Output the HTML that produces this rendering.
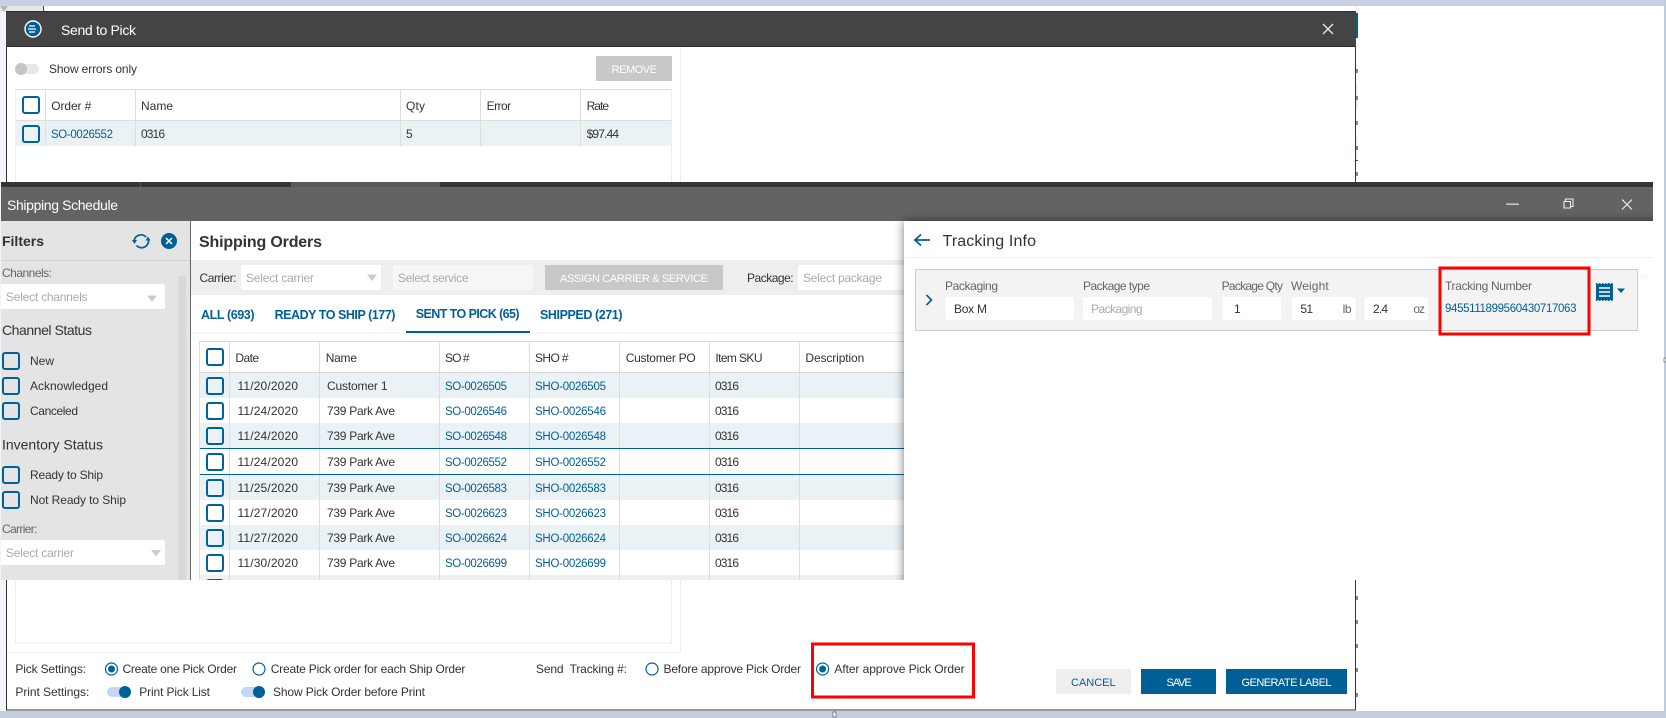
<!DOCTYPE html>
<html lang="en"><head><meta charset="utf-8"><title>Send to Pick</title>
<style>
html,body{margin:0;padding:0;background:#fff;width:1666px;height:718px;overflow:hidden}
svg{display:block}
text{font-family:"Liberation Sans",sans-serif;font-size:12px;fill:#333}
.l{fill:#005f96}.m{font-size:11.5px}
.g{fill:#666}.p{fill:#aaa}.h{font-size:14px}
.b{font-weight:700}.t{font-weight:700;fill:#005f96;font-size:12.5px}
.w{fill:#fff}.u{font-size:11px}
</style></head><body>
<svg xmlns="http://www.w3.org/2000/svg" width="1666" height="718" viewBox="0 0 1666 718">
<defs>
<rect id="cb" width="16" height="16" rx="2" fill="none" stroke="#00619b" stroke-width="2"/>
<clipPath id="win"><rect x="0" y="182" width="1653" height="398"/></clipPath>
<filter id="sh" x="-5%" y="-10%" width="110%" height="120%"><feDropShadow dx="0" dy="0" stdDeviation="5" flood-color="#000" flood-opacity=".55"/></filter>
</defs>
<rect width="1666" height="718" fill="#fff"/>
<rect width="1666" height="6" fill="#c8d0e2"/>
<rect x="1664" width="2" height="718" fill="#c0cbdd"/>
<rect y="711" width="1666" height="7" fill="#c3cddb"/>
<rect y="6" width="6" height="705" fill="#f2f5fa"/>
<rect x="0" y="6" width="43" height="5" fill="#e6e6e6"/>
<path d="M0 6h8l-4 6z" fill="#b8b8b8"/>
<rect x="43" y="6" width="1" height="5" fill="#444"/>
<rect x="1356" y="6" width="2" height="7" fill="#eef1f7"/>
<rect x="1356" y="13" width="2" height="25" fill="#005f96"/>
<rect x="1356" y="84" width="2" height="26" fill="#eef3f6"/>
<rect x="1356" y="135" width="2" height="25" fill="#eef3f6"/>
<rect x="1356" y="160" width="2" height="1" fill="#005f96"/>
<path d="M1356 71h2M1356 98h2M1356 123h2M1356 148h2M1356 174h2M1356 598h2M1356 622h2M1356 646h2M1356 670h2M1356 695h2" stroke="#555" stroke-width="4" stroke-dasharray="none" opacity=".7"/>
<rect x="833" y="712" width="3" height="5" fill="#fff" stroke="#555" stroke-width=".7"/>
<rect x="1664" y="358" width="2" height="4" fill="#fff" stroke="#555" stroke-width=".6"/>

<!-- Send to Pick window -->
<rect x="6.5" y="11.5" width="1349" height="698.5" fill="#fff" stroke="#333"/>
<rect x="6" y="11" width="1350" height="36" fill="#444"/>
<rect x="6" y="11" width="1350" height="1" fill="#2f2f2f"/><rect x="6" y="46" width="1350" height="1" fill="#2f2f2f"/>
<circle cx="33" cy="29" r="8" fill="#005f96" stroke="#fff" stroke-width="1.4"/>
<path d="M29 26h6M28 29h8M29 32h6" stroke="#fff" stroke-width="1.2" fill="none"/>
<text class="w h" x="61" y="35" textLength="75">Send to Pick</text>
<path d="M1323 24l10 10M1333 24l-10 10" stroke="#e8e8e8" stroke-width="1.3"/>
<rect x="680" y="47" width="1" height="605" fill="#eee"/>
<rect x="15" y="64" width="24" height="10" rx="5" fill="#e8e8e8"/><circle cx="21" cy="69" r="6" fill="#c4c4c4"/>
<text x="49" y="73" textLength="88">Show errors only</text>
<rect x="596" y="56" width="76" height="25" fill="#c8c8c8"/>
<text class="w u" x="611.6" y="73" textLength="45.4">REMOVE</text>
<rect x="15.5" y="89.5" width="656" height="553.5" fill="#fff" stroke="#eee"/>
<rect x="16" y="121" width="655" height="25" fill="#eaf2f6"/>
<path d="M16 89.5h655M16 120.500h655" stroke="#ddd"/>
<path d="M45.500 90V146M135.500 90V146M400.500 90V146M480.500 90V146M580.500 90V146" stroke="#ddd"/>
<use href="#cb" x="23" y="97"/><use href="#cb" x="23" y="126"/>
<text x="51.300" y="110" textLength="40">Order #</text><text x="141" y="110" textLength="32">Name</text><text x="406" y="110" textLength="19">Qty</text><text x="486.600" y="110" textLength="24.500">Error</text><text x="586.600" y="110" textLength="22.500">Rate</text>
<text class="l m" x="51" y="138" textLength="62">SO-0026552</text><text x="141" y="138" textLength="24">0316</text><text x="406" y="138">5</text><text x="586.600" y="138" textLength="32.500">$97.44</text>
<rect x="7" y="652" width="673" height="1" fill="#eee"/>

<text x="15.400" y="673" textLength="70.600">Pick Settings:</text>
<circle cx="111.500" cy="669" r="6" fill="#fff" stroke="#00619b" stroke-width="1.200"/><circle cx="111.500" cy="669" r="3.500" fill="#00619b"/>
<text x="122.500" y="673" textLength="114.500">Create one Pick Order</text>
<circle cx="259" cy="669" r="6" fill="#fff" stroke="#00619b" stroke-width="1.200"/>
<text x="270.700" y="673" textLength="194.700">Create Pick order for each Ship Order</text>
<text x="15.400" y="696" textLength="73.900">Print Settings:</text>
<rect x="107" y="687" width="22" height="10" rx="5" fill="#c3d6f7"/><circle cx="125" cy="692" r="6" fill="#005f96"/>
<text x="139.300" y="696" textLength="70.700">Print Pick List</text>
<rect x="241" y="687" width="22" height="10" rx="5" fill="#c3d6f7"/><circle cx="259" cy="692" r="6" fill="#005f96"/>
<text x="273" y="696" textLength="152">Show Pick Order before Print</text>
<text x="536" y="673" textLength="91" xml:space="preserve">Send  Tracking #:</text>
<circle cx="652" cy="669" r="6" fill="#fff" stroke="#00619b" stroke-width="1.200"/>
<text x="663.500" y="673" textLength="137.500">Before approve Pick Order</text>
<circle cx="822.600" cy="669" r="6" fill="#fff" stroke="#00619b" stroke-width="1.200"/><circle cx="822.600" cy="669" r="3.500" fill="#00619b"/>
<text x="834.400" y="673" textLength="130.200">After approve Pick Order</text>
<rect x="812.500" y="644" width="161" height="53" fill="none" stroke="#f00" stroke-width="3"/>
<rect x="1056" y="669" width="75" height="25" fill="#eee"/><text class="l u" x="1071" y="686" textLength="44.600">CANCEL</text>
<rect x="1141" y="669" width="75" height="25" fill="#005f96"/><text class="w u" x="1166.500" y="686" textLength="25.200">SAVE</text>
<rect x="1226" y="669" width="121" height="25" fill="#005f96"/><text class="w u" x="1241.500" y="686" textLength="90">GENERATE LABEL</text>

<!-- Shipping Schedule window -->
<g clip-path="url(#win)">
<rect x="1" y="182" width="1652" height="5" fill="#353535"/>
<rect x="140" y="182" width="1" height="5" fill="#555"/><rect x="291" y="182" width="149" height="5" fill="#5a5a5a"/>
<rect x="1" y="187" width="1652" height="34" fill="#636363"/>
<text class="w h" x="7" y="210" textLength="111">Shipping Schedule</text>
<rect x="1506" y="203.500" width="13" height="1.300" fill="#ddd"/>
<path d="M1565.500 201.500v-2.500h7.500v7.500h-2.500M1565.500 201.500h5v6.500h-6.500v-6.500z" fill="none" stroke="#eee" stroke-width="1.100"/>
<path d="M1622 199.500l10 10M1632 199.500l-10 10" stroke="#eee" stroke-width="1.200"/>

<!-- Sidebar -->
<rect x="1" y="221" width="189" height="359" fill="#e4e4e4"/>
<rect x="190" y="221" width="1" height="359" fill="#666"/>
<rect x="1" y="260" width="189" height="1" fill="#d2d2d2"/>
<rect x="178.600" y="276" width="7.400" height="304" fill="#d8d8d8"/>
<path d="M179 270l3.500-3 3.500 3" fill="none" stroke="#ececec"/>
<text class="b h" x="2" y="246" textLength="42">Filters</text>
<path d="M134 241.500a7 7 0 0 1 12-4.500M148.500 239.500a7 7 0 0 1-12 6" fill="none" stroke="#005f96" stroke-width="1.700"/>
<path d="M132 240h5l-2.500 4zM145.500 240.500h5l-2.500-4z" fill="#005f96"/>
<circle cx="169" cy="241" r="8" fill="#005f96"/>
<path d="M166 238l6 6M172 238l-6 6" stroke="#fff" stroke-width="1.500"/>
<text class="g" x="2" y="277" textLength="50">Channels:</text>
<rect x="1" y="284" width="164" height="25" rx="2" fill="#fff"/>
<text class="p" x="6" y="301" textLength="81.500">Select channels</text>
<path d="M147 295.500h10l-5 6.500z" fill="#ccc"/>
<text class="h" x="2" y="335" textLength="90">Channel Status</text>
<use href="#cb" x="3" y="353"/><text x="30" y="365" textLength="24">New</text>
<use href="#cb" x="3" y="378"/><text x="30" y="390" textLength="78">Acknowledged</text>
<use href="#cb" x="3" y="403"/><text x="30" y="415" textLength="48">Canceled</text>
<text class="h" x="2" y="449.500" textLength="101">Inventory Status</text>
<use href="#cb" x="3" y="467"/><text x="30" y="479" textLength="73">Ready to Ship</text>
<use href="#cb" x="3" y="492"/><text x="30" y="504" textLength="96">Not Ready to Ship</text>
<text class="g" x="2" y="533" textLength="35.500">Carrier:</text>
<rect x="1" y="540" width="164" height="25" rx="2" fill="#fff"/>
<text class="p" x="6" y="557" textLength="68">Select carrier</text>
<path d="M151 550h10l-5 6.500z" fill="#ccc"/>
<text class="g" x="2" y="589" textLength="40">Weight:</text>

<!-- Main -->
<rect x="191" y="221" width="713" height="359" fill="#fff"/>
<text class="b" style="font-size:16px" x="199" y="247" textLength="123">Shipping Orders</text>
<rect x="191" y="260" width="713" height="35" fill="#eee"/>
<text x="199.500" y="282" textLength="37">Carrier:</text>
<rect x="241" y="265" width="140" height="25" rx="2" fill="#fff"/>
<text class="p" x="246" y="282" textLength="68">Select carrier</text>
<path d="M367 274.500h10l-5 6.500z" fill="#ccc"/>
<rect x="393" y="265" width="140" height="25" rx="2" fill="#f6f6f6"/>
<text class="p" x="398" y="282" textLength="70.500">Select service</text>
<rect x="545" y="265" width="178" height="25" rx="1" fill="#c8c8c8"/>
<text class="w u" x="560" y="282" textLength="148">ASSIGN CARRIER &amp; SERVICE</text>
<text x="747" y="282" textLength="46.600">Package:</text>
<rect x="798" y="265" width="110" height="25" rx="2" fill="#fff"/>
<text class="p" x="803" y="282" textLength="79">Select package</text>
<text class="t" x="201" y="319" textLength="53.500">ALL (693)</text>
<text class="t" x="274.600" y="319" textLength="120.800">READY TO SHIP (177)</text>
<text class="t" x="415.700" y="318" textLength="103.900">SENT TO PICK (65)</text>
<text class="t" x="540" y="319" textLength="82.500">SHIPPED (271)</text>
<rect x="191" y="332.500" width="713" height="1" fill="#eee"/>
<rect x="406" y="331" width="124" height="2" fill="#005f96"/>

<rect x="200" y="372" width="704" height="26" fill="#eaf2f6"/>
<rect x="200" y="423" width="704" height="25" fill="#eaf2f6"/>
<rect x="200" y="474" width="704" height="26" fill="#eaf2f6"/>
<rect x="200" y="525" width="704" height="25" fill="#eaf2f6"/>
<rect x="200" y="575" width="704" height="5" fill="#eaf2f6"/>
<path d="M200 341.500h704M200 372.500h704" stroke="#d8d8d8"/>
<path d="M199.500 341V580M229.500 341V580M319.500 341V580M439.500 341V580M529.500 341V580M619.500 341V580M709.500 341V580M799.500 341V580" stroke="#ddd"/>
<path d="M200 448.500h704M200 474.500h704" stroke="#005f96"/>
<use href="#cb" x="207" y="349"/>
<text x="235.400" y="362" textLength="23.600">Date</text><text x="325.700" y="362" textLength="31.300">Name</text><text x="445" y="362" textLength="24.600">SO #</text><text x="535" y="362" textLength="33.600">SHO #</text><text x="625.700" y="362" textLength="70">Customer PO</text><text x="715.400" y="362" textLength="47.100">Item SKU</text><text x="805.400" y="362" textLength="58.900">Description</text>

<use href="#cb" x="207" y="378"/><text x="237.500" y="390" textLength="60.500">11/20/2020</text><text x="327" y="390" textLength="60.500">Customer 1</text><text class="l m" x="445" y="390" textLength="62">SO-0026505</text><text class="l m" x="535" y="390" textLength="71">SHO-0026505</text><text x="715" y="390" textLength="24">0316</text>
<use href="#cb" x="207" y="403"/><text x="237.500" y="415" textLength="60.500">11/24/2020</text><text x="327" y="415" textLength="68">739 Park Ave</text><text class="l m" x="445" y="415" textLength="62">SO-0026546</text><text class="l m" x="535" y="415" textLength="71">SHO-0026546</text><text x="715" y="415" textLength="24">0316</text>
<use href="#cb" x="207" y="428"/><text x="237.500" y="440" textLength="60.500">11/24/2020</text><text x="327" y="440" textLength="68">739 Park Ave</text><text class="l m" x="445" y="440" textLength="62">SO-0026548</text><text class="l m" x="535" y="440" textLength="71">SHO-0026548</text><text x="715" y="440" textLength="24">0316</text>
<use href="#cb" x="207" y="454"/><text x="237.500" y="466" textLength="60.500">11/24/2020</text><text x="327" y="466" textLength="68">739 Park Ave</text><text class="l m" x="445" y="466" textLength="62">SO-0026552</text><text class="l m" x="535" y="466" textLength="71">SHO-0026552</text><text x="715" y="466" textLength="24">0316</text>
<use href="#cb" x="207" y="480"/><text x="237.500" y="492" textLength="60.500">11/25/2020</text><text x="327" y="492" textLength="68">739 Park Ave</text><text class="l m" x="445" y="492" textLength="62">SO-0026583</text><text class="l m" x="535" y="492" textLength="71">SHO-0026583</text><text x="715" y="492" textLength="24">0316</text>
<use href="#cb" x="207" y="505"/><text x="237.500" y="517" textLength="60.500">11/27/2020</text><text x="327" y="517" textLength="68">739 Park Ave</text><text class="l m" x="445" y="517" textLength="62">SO-0026623</text><text class="l m" x="535" y="517" textLength="71">SHO-0026623</text><text x="715" y="517" textLength="24">0316</text>
<use href="#cb" x="207" y="530"/><text x="237.500" y="542" textLength="60.500">11/27/2020</text><text x="327" y="542" textLength="68">739 Park Ave</text><text class="l m" x="445" y="542" textLength="62">SO-0026624</text><text class="l m" x="535" y="542" textLength="71">SHO-0026624</text><text x="715" y="542" textLength="24">0316</text>
<use href="#cb" x="207" y="555"/><text x="237.500" y="567" textLength="60.500">11/30/2020</text><text x="327" y="567" textLength="68">739 Park Ave</text><text class="l m" x="445" y="567" textLength="62">SO-0026699</text><text class="l m" x="535" y="567" textLength="71">SHO-0026699</text><text x="715" y="567" textLength="24">0316</text>
<use href="#cb" x="207" y="580"/>

<!-- Tracking panel -->
<rect x="904" y="221" width="760" height="380" fill="#fff" filter="url(#sh)"/>
</g>
<rect x="904" y="257" width="749" height="1" fill="#eee"/>
<path d="M930 240h-15M921 234.500l-6 5.500 6 5.500" fill="none" stroke="#005f96" stroke-width="1.800"/>
<text style="font-size:16px" x="942.500" y="246" textLength="93.500">Tracking Info</text>
<rect x="915.500" y="269.500" width="722" height="61" fill="#f3f3f3" stroke="#ccc"/>
<path d="M926.500 295l5 5-5 5" fill="none" stroke="#005f96" stroke-width="1.600"/>
<text class="g" x="945" y="290" textLength="53">Packaging</text>
<rect x="945.500" y="297" width="128.500" height="23" rx="2" fill="#fff"/>
<text x="954" y="313" textLength="33">Box M</text>
<text class="g" x="1083" y="290" textLength="67">Package type</text>
<rect x="1083" y="297" width="129" height="23" rx="2" fill="#fff"/>
<text class="p" x="1091" y="313" textLength="51.600">Packaging</text>
<text class="g" x="1221.600" y="290" textLength="61.400">Package Qty</text>
<rect x="1222.500" y="297" width="58.500" height="23" rx="2" fill="#fff"/>
<text x="1234" y="313">1</text>
<text class="g" x="1291" y="290" textLength="37.700">Weight</text>
<rect x="1291.700" y="297" width="63.900" height="23" rx="2" fill="#fff"/>
<text x="1300.400" y="313" textLength="12.600">51</text><text class="g" x="1342.600" y="313" textLength="9">lb</text>
<rect x="1364.500" y="297" width="63.500" height="23" rx="2" fill="#fff"/>
<text x="1373" y="313" textLength="15">2.4</text><text class="g" x="1413.400" y="313" textLength="11.600">oz</text>
<text class="g" x="1445" y="290" textLength="87">Tracking Number</text>
<text class="l m" x="1445" y="312" textLength="131.500">9455111899560430717063</text>
<rect x="1440" y="268" width="149" height="66" fill="none" stroke="#f00" stroke-width="3"/>
<rect x="1596" y="284" width="17" height="16" fill="#005f96"/>
<path d="M1596 283.500h17M1596 300.500h17" stroke="#005f96" stroke-dasharray="1.500 1.500"/>
<path d="M1599 288h11M1599 292h11M1599 296h11" stroke="#fff" stroke-width="1.600"/>
<path d="M1617 288.500h8l-4 4.500z" fill="#005f96"/>
<path d="M1641 279l4-4 4 4" fill="none" stroke="#f2f2f2" stroke-width="1.200"/>
</svg>
</body></html>
